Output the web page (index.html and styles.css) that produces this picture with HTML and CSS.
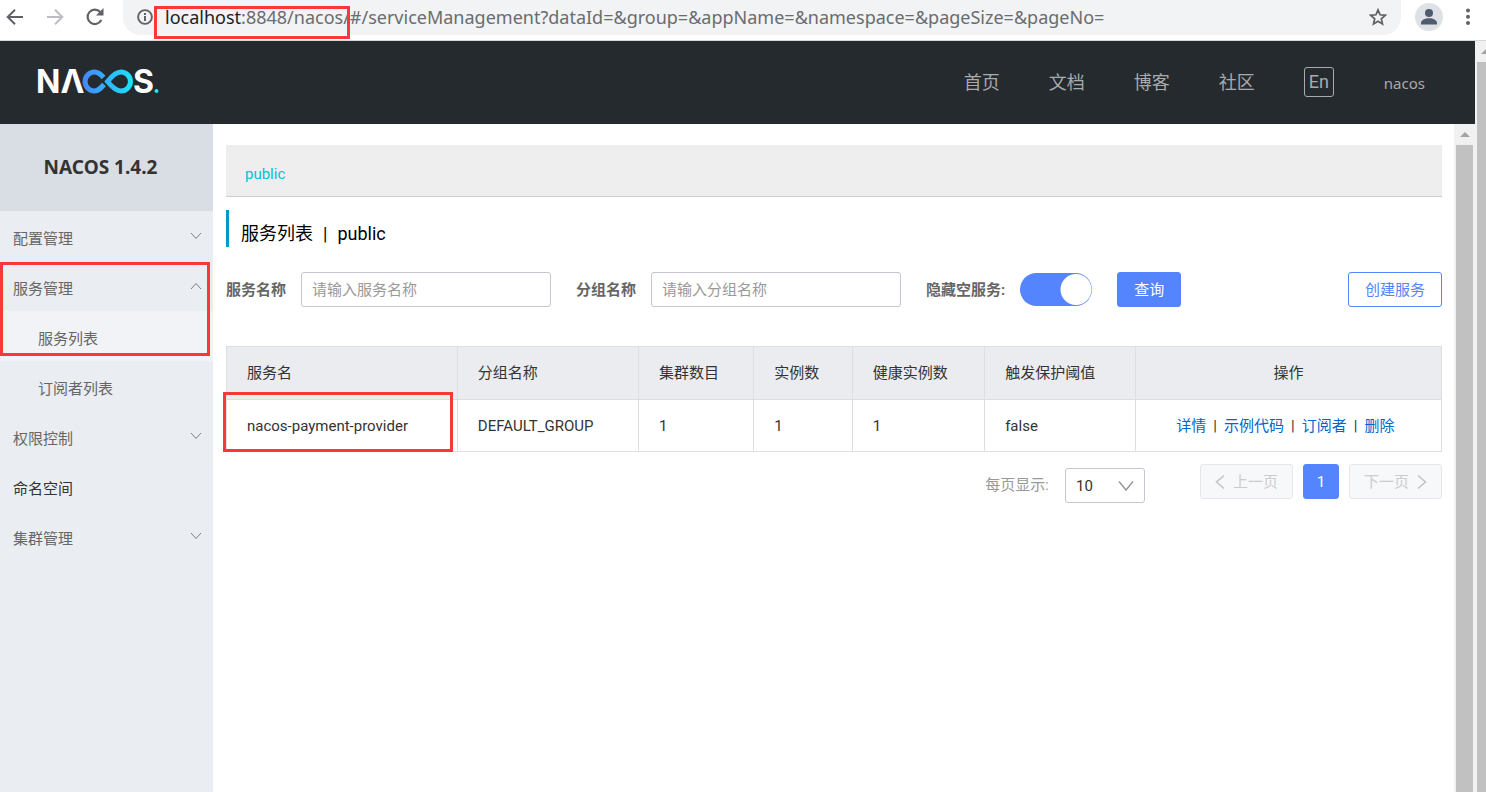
FILE: index.html
```html
<!DOCTYPE html>
<html lang="zh-CN">
<head>
<meta charset="utf-8">
<title>Nacos</title>
<link rel="stylesheet" href="styles.css">
</head>
<body>
<div class="browser">
  <div class="nav-buttons">
    <button class="icon-btn" aria-label="Back"><svg width="18" height="18" viewBox="0 0 18 18" fill="none" stroke="#5f6368" stroke-width="2"><path d="M17 9H2M9 1.700 1.700 9 9 16.300"/></svg></button>
    <button class="icon-btn" aria-label="Forward"><svg width="18" height="18" viewBox="0 0 18 18" fill="none" stroke="#bcbec1" stroke-width="2"><path d="M1 9h15M9 1.700 16.300 9 9 16.300"/></svg></button>
    <button class="icon-btn" aria-label="Reload"><svg width="18" height="18" viewBox="0 0 18 18"><path d="M15.300 12A7.200 7.200 0 1 1 14.200 4" fill="none" stroke="#5f6368" stroke-width="2.200"/><path d="M17.500 0v7.500H10z" fill="#5f6368"/></svg></button>
  </div>
  <div class="address">
    <svg class="info" width="16" height="16" viewBox="0 0 16 16"><circle cx="8" cy="8" r="6.900" fill="none" stroke="#5f6368" stroke-width="1.900"/><path d="M7 7h2v5H7zM7 4h2v2H7z" fill="#5f6368"/></svg>
    <span class="url"><b>localhost</b>:8848/nacos/#/serviceManagement?dataId=&amp;group=&amp;appName=&amp;namespace=&amp;pageSize=&amp;pageNo=</span>
    <button class="icon-btn" aria-label="Bookmark"><svg width="18" height="18" viewBox="0 0 18 18" fill="none" stroke="#5f6368" stroke-width="1.700"><path d="M9 1.900l2.100 4.900 5.200.5-4 3.500 1.200 5.200L9 13.300 4.500 16l1.200-5.200-4-3.500 5.200-.5z"/></svg></button>
    <i class="mark mark-url"></i>
  </div>
  <button class="icon-btn avatar" aria-label="Profile"><svg width="28" height="28" viewBox="0 0 28 28"><circle cx="14" cy="14" r="14" fill="#dee1e6"/><circle cx="14" cy="10" r="4" fill="#4f5b6e"/><path d="M6 21.500v-1.500c0-3 4-4.700 8-4.700s8 1.700 8 4.700v1.500z" fill="#4f5b6e"/></svg></button>
  <button class="icon-btn" aria-label="Menu"><svg width="6" height="18" viewBox="0 0 6 18" fill="#5f6368"><circle cx="3" cy="2.500" r="2"/><circle cx="3" cy="8.800" r="2"/><circle cx="3" cy="15" r="2"/></svg></button>
</div>

<div class="viewport">
  <div class="page">
    <header class="top">
      <a class="logo" href="#" aria-label="NACOS">
        <svg width="126" height="44" viewBox="-2 -8 126 44">
          <defs><linearGradient id="g" gradientUnits="userSpaceOnUse" x1="45" y1="0" x2="96" y2="0"><stop offset="0" stop-color="#4586ff"/><stop offset="1" stop-color="#1be6f5"/></linearGradient></defs>
          <text class="logo-letter" x="-2" y="25">NΛ</text>
          <path d="M66 16.500C62 21 60 23 56.500 23a9.300 9.300 0 0 1 0-18.900c3.500 0 6.500 2.500 9 5.400" fill="none" stroke="url(#g)" stroke-width="5"/>
          <path d="M69.500 13.500C74 8 78 4.100 83 4.100a9.400 9.400 0 0 1 0 18.900c-5 0-9-4-13.500-9.500z" fill="none" stroke="url(#g)" stroke-width="5"/>
          <text class="logo-letter" x="95" y="25">S</text>
          <circle cx="118.500" cy="23" r="2" fill="#1be6f5"/>
        </svg>
      </a>
      <nav class="top-nav">
        <a href="#">首页</a><a href="#">文档</a><a href="#">博客</a><a href="#">社区</a>
        <button class="lang">En</button>
        <a class="user" href="#">nacos</a>
      </nav>
    </header>

    <div class="body">
      <aside class="side">
        <h1 class="side-title">NACOS 1.4.2</h1>
        <ul class="menu">
          <li><a href="#">配置管理<svg class="chev" width="12" height="8" viewBox="0 0 12 8"><path d="M1 1l5 5.500L11 1"/></svg></a></li>
          <li class="open"><a href="#">服务管理<svg class="chev" width="12" height="8" viewBox="0 0 12 8"><path d="M1 7l5-5.500L11 7"/></svg></a>
            <ul class="menu sub">
              <li class="current"><a href="#">服务列表</a></li>
              <li><a href="#">订阅者列表</a></li>
            </ul>
            <i class="mark mark-menu"></i>
          </li>
          <li><a href="#">权限控制<svg class="chev" width="12" height="8" viewBox="0 0 12 8"><path d="M1 1l5 5.500L11 1"/></svg></a></li>
          <li class="leaf"><a href="#">命名空间</a></li>
          <li><a href="#">集群管理<svg class="chev" width="12" height="8" viewBox="0 0 12 8"><path d="M1 1l5 5.500L11 1"/></svg></a></li>
        </ul>
      </aside>

      <main class="main">
        <div class="namespaces"><a href="#">public</a></div>
        <h2 class="heading"><span>服务列表</span><span>|</span><span>public</span></h2>

        <form class="filters">
          <label for="svc">服务名称</label>
          <input id="svc" class="text" type="text" placeholder="请输入服务名称">
          <label for="grp">分组名称</label>
          <input id="grp" class="text" type="text" placeholder="请输入分组名称">
          <label for="hide">隐藏空服务:</label>
          <input id="hide" class="switch" type="checkbox" checked>
          <button class="btn primary" type="button">查询</button>
          <button class="btn outline" type="button">创建服务</button>
        </form>

        <table class="services">
          <colgroup><col class="c-name"><col class="c-group"><col class="c-cluster"><col class="c-inst"><col class="c-healthy"><col class="c-thresh"><col></colgroup>
          <thead><tr><th>服务名</th><th>分组名称</th><th>集群数目</th><th>实例数</th><th>健康实例数</th><th>触发保护阈值</th><th class="ops">操作</th></tr></thead>
          <tbody><tr>
            <td class="name">nacos-payment-provider<i class="mark mark-cell"></i></td><td>DEFAULT_GROUP</td><td>1</td><td>1</td><td>1</td><td>false</td>
            <td class="ops"><div class="links"><a href="#">详情</a><span>|</span><a href="#">示例代码</a><span>|</span><a href="#">订阅者</a><span>|</span><a href="#">删除</a></div></td>
          </tr></tbody>
        </table>

        <div class="pager">
          <label for="size">每页显示:</label>
          <span class="select-wrap">
            <select id="size"><option>10</option></select>
            <svg width="16" height="12" viewBox="0 0 16 12"><path d="M1 1.500l7 8.500 7-8.500"/></svg>
          </span>
          <div class="pages">
            <button class="page-btn" type="button" disabled><svg width="10" height="16" viewBox="0 0 10 16"><path d="M9 1.500 1.500 8 9 14.500"/></svg>上一页</button>
            <button class="page-btn active" type="button">1</button>
            <button class="page-btn" type="button" disabled>下一页<svg width="10" height="16" viewBox="0 0 10 16"><path d="M1 1.500 8.500 8 1 14.500"/></svg></button>
          </div>
        </div>
      </main>
      <div class="scroll inner"><svg width="10" height="5" viewBox="0 0 10 5"><path d="M5 0l5 5H0z"/></svg><i></i></div>
    </div>
  </div>
  <div class="scroll outer"><svg width="10" height="5" viewBox="0 0 10 5"><path d="M5 0l5 5H0z"/></svg><i></i></div>
</div>
</body>
</html>
```
FILE: styles.css
```css
* { box-sizing: border-box; }
body {
  margin: 0;
  height: 100vh;
  display: flex;
  flex-direction: column;
  overflow: hidden;
  background: #fff;
  color: #333;
  font: 15px/20px Roboto, "Noto Sans CJK SC", sans-serif;
}
a { color: inherit; text-decoration: none; }
ul { list-style: none; margin: 0; padding: 0; }
button, input, select { font: inherit; margin: 0; }
svg { display: block; flex: none; }

.mark { position: absolute; border: 3px solid #fb3838; pointer-events: none; }

/* Browser toolbar */
.browser {
  flex: none;
  display: flex;
  align-items: center;
  height: 41px;
  padding: 0 15px 6px 6px;
  border-bottom: 1px solid #d5d7da;
}
.icon-btn { padding: 0; border: 0; background: none; flex: none; }
.nav-buttons { display: flex; gap: 22px; width: 117px; flex: none; }
.address {
  position: relative;
  flex: 1;
  display: flex;
  align-items: center;
  height: 35px;
  padding: 0 14px;
  border-radius: 0 0 18px 18px;
  background: #f1f3f4;
}
.url {
  flex: 1;
  margin-left: 12px;
  color: #696c70;
  font-family: "Noto Sans", sans-serif;
  font-size: 18px;
  white-space: nowrap;
}
.url b { font-weight: 400; color: #202124; }
.mark-url { left: 31px; top: 6px; width: 196px; height: 33px; }
.avatar { margin: 0 22px 0 14px; }

/* Page frame */
.viewport { flex: 1; display: flex; min-height: 0; }
.page { flex: 1; min-width: 0; display: flex; flex-direction: column; }
.top {
  flex: none;
  display: flex;
  align-items: center;
  justify-content: space-between;
  height: 83px;
  padding: 0 50px 2px 36px;
  background: #252a2f;
  color: #a8aaac;
}
.logo-letter { font: 700 32px Inter, sans-serif; fill: #fff; }
.top-nav { display: flex; align-items: center; gap: 49px; font-size: 18px; }
.top-nav a { padding-top: 2px; }
.lang {
  width: 30px;
  height: 30px;
  padding: 0;
  border: 1px solid #a8aaac;
  border-radius: 3px;
  background: none;
  color: inherit;
  line-height: 26px;
}
.user { margin-left: 1px; font-family: "Noto Sans", sans-serif; font-size: 15px; }
.body { flex: 1; display: flex; min-height: 0; }

.scroll { flex: none; display: flex; flex-direction: column; align-items: center; background: #f1f1f1; overflow: hidden; }
.scroll svg { margin: 8px 0; fill: #a3a3a3; }
.scroll i { flex: 1; width: 17px; background: #c1c1c1; }
.inner { width: 21px; }
.outer { width: 11px; align-items: flex-start; padding-left: 2px; }
.outer svg { margin-left: 4px; }

/* Sidebar */
.side { flex: none; width: 213px; background: #eaedf1; color: #666; }
.side-title {
  margin: 0;
  height: 87px;
  padding-right: 12px;
  background: #d9dde4;
  color: #333;
  font-family: "Noto Sans", sans-serif;
  font-size: 19px;
  line-height: 87px;
  text-align: center;
}
.menu a { display: flex; align-items: center; justify-content: space-between; height: 50px; padding: 5px 11px 0 13px; }
.menu .sub a { padding-left: 38px; }
.chev { margin-bottom: 5px; fill: none; stroke: #777d88; }
.open { position: relative; }
.current { background: #f2f3f7; }
.leaf { color: #333; }
.mark-menu { left: 0; top: 1px; width: 210px; height: 94px; }

/* Content */
.main { flex: 1; min-width: 0; padding: 21px 12px 0 13px; }
.namespaces { height: 52px; padding: 19px; background: #eee; border-bottom: 1px solid #ccc; color: #00c1de; }
.heading {
  display: flex;
  gap: 10px;
  margin: 13px 0 25px;
  padding: 12px 0 1px 12px;
  border-left: 3px solid #09c;
  color: #000;
  font-size: 18px;
  font-weight: 400;
  line-height: 24px;
}
.filters { display: flex; align-items: center; }
.filters label { margin-right: 15px; font-weight: 700; color: #666; white-space: nowrap; }
.text {
  flex: 0 1 250px;
  min-width: 0;
  height: 35px;
  margin-right: 25px;
  padding: 0 10px;
  border: 1px solid #c4c6cf;
  border-radius: 3px;
  background: #fff;
}
.text::placeholder { color: #999; opacity: 1; }
.switch {
  appearance: none;
  flex: none;
  width: 72px;
  height: 33px;
  margin-right: 25px;
  border-radius: 17px;
  background: radial-gradient(circle at 56px 50%, #fff 15px, #5584ff 16px);
}
.btn { height: 35px; padding: 0 16px; border: 1px solid #5584ff; border-radius: 3px; white-space: nowrap; }
.primary { background: #5584ff; color: #fff; }
.outline { margin-left: auto; background: #fff; color: #5584ff; }

.services { width: 100%; margin-top: 39px; border-collapse: collapse; table-layout: fixed; }
.services th, .services td { padding: 15px 20px; border: 1px solid #dcdee3; text-align: left; font-weight: 400; white-space: nowrap; }
.services th { height: 53px; background: #ebecf0; }
.services td { height: 52px; }
.services .ops { text-align: center; }
.services td.name { position: relative; }
.c-name { width: 19%; }
.c-group { width: 14.9%; }
.c-cluster { width: 9.5%; }
.c-inst { width: 8.1%; }
.c-healthy { width: 10.9%; }
.c-thresh { width: 12.4%; }
.mark-cell { left: -4px; top: -8px; width: 230px; height: 60px; }
.links { display: flex; justify-content: center; gap: 7px; padding-right: 6px; color: #06c; }
.links span { color: #333; }

.pager { display: flex; justify-content: flex-end; margin-top: 12px; color: #999; }
.pager label { margin: 11px 16px 0 0; }
.select-wrap { position: relative; width: 80px; margin: 4px 55px 0 0; }
.select-wrap select {
  appearance: none;
  width: 100%;
  height: 35px;
  padding: 0 10px;
  border: 1px solid #c4c6cf;
  border-radius: 3px;
  background: #fff;
  color: #333;
}
.select-wrap svg { position: absolute; right: 11px; top: 12px; fill: none; stroke: #999; stroke-width: 1.500; pointer-events: none; }
.pages { display: flex; gap: 10px; }
.page-btn {
  display: flex;
  align-items: center;
  justify-content: center;
  gap: 8px;
  height: 35px;
  min-width: 36px;
  padding: 0 14px;
  border: 1px solid #e6e7eb;
  border-radius: 3px;
  background: #f7f8fa;
  color: #ccc;
}
.page-btn svg { fill: none; stroke: #c2c2c2; stroke-width: 1.500; }
.page-btn.active { padding: 0; border-color: #5584ff; background: #5584ff; color: #fff; }
```
